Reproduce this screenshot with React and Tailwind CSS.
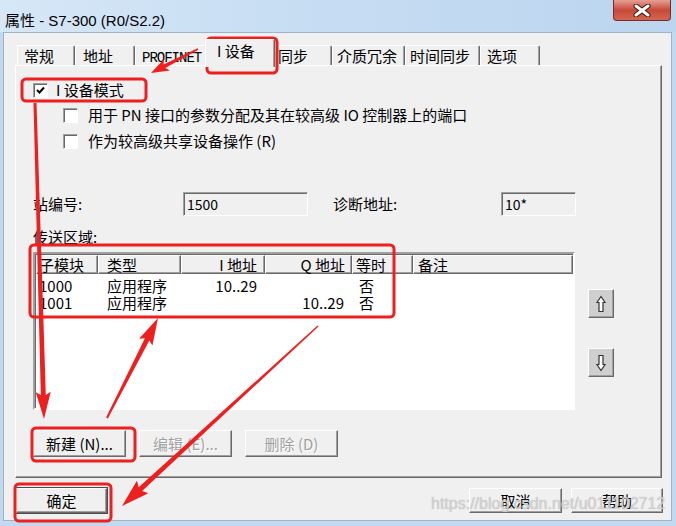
import React from 'react';

const ui = 'font-["Noto_Sans_CJK_SC",sans-serif]';
const raised =
  'border border-t-white border-l-white border-r-[#696969] border-b-[#696969] shadow-[inset_-1px_-1px_0_#a0a0a0]';
const sunken =
  'border border-t-[#a0a0a0] border-l-[#a0a0a0] border-r-white border-b-white shadow-[inset_1px_1px_0_#696969]';

const tabs = [
  { label: '常规', w: 'w-[58px]', pl: 'pl-[6px]' },
  { label: '地址', w: 'w-[60px]', pl: 'pl-[7px]' },
  { label: 'PROFINET', w: 'w-[72px]', pl: 'pl-[6px]', mono: true },
  { label: 'I 设备', w: 'w-[70px]', pl: 'pl-[11px]', active: true },
  { label: '同步', w: 'w-[59px]', pl: 'pl-[4px]' },
  { label: '介质冗余', w: 'w-[73px]', pl: 'pl-[4px]' },
  { label: '时间同步', w: 'w-[75px]', pl: 'pl-[4px]' },
  { label: '选项', w: 'w-[60px]', pl: 'pl-[6px]' },
];

const rows = [
  { id: '1000', type: '应用程序', i: '10..29', q: '', iso: '否' },
  { id: '1001', type: '应用程序', i: '', q: '10..29', iso: '否' },
];

function arrow(x1, y1, x2, y2, headLen, headW, tailW, neckW) {
  const dx = x2 - x1;
  const dy = y2 - y1;
  const len = Math.hypot(dx, dy);
  const ux = dx / len;
  const uy = dy / len;
  const px = -uy;
  const py = ux;
  const bx = x2 - ux * headLen;
  const by = y2 - uy * headLen;
  const pts = [
    [x1 + (px * tailW) / 2, y1 + (py * tailW) / 2],
    [bx + (px * neckW) / 2, by + (py * neckW) / 2],
    [bx + (px * headW) / 2 - ux * 3, by + (py * headW) / 2 - uy * 3],
    [x2, y2],
    [bx - (px * headW) / 2 - ux * 3, by - (py * headW) / 2 - uy * 3],
    [bx - (px * neckW) / 2, by - (py * neckW) / 2],
    [x1 - (px * tailW) / 2, y1 - (py * tailW) / 2],
  ];
  return pts.map((p) => p.join(',')).join(' ');
}

function Checkbox({ checked }) {
  return (
    <div className={`w-[15px] h-[15px] bg-white flex items-center justify-center ${sunken}`}>
      {checked && (
        <svg width="9" height="8" viewBox="0 0 9 8">
          <path d="M1 4 L3.5 6.5 L8 1.5" fill="none" stroke="#000" strokeWidth="2" />
        </svg>
      )}
    </div>
  );
}

function MoveButton({ down }) {
  return (
    <div className={`w-[26px] h-[29px] bg-[#cfcfcf] flex items-center justify-center ${raised}`}>
      <svg width="12" height="18" viewBox="0 0 12 18" className={down ? 'rotate-180' : ''}>
        <path d="M6 1.5 L10 7.5 L8 7.5 L8 16.5 L4 16.5 L4 7.5 L2 7.5 Z" fill="#fff" stroke="#333" strokeWidth="1.2" />
      </svg>
    </div>
  );
}

function Button({ children, disabled, isDefault, className = '' }) {
  return (
    <div
      className={`h-[27px] bg-[#f0f0f0] flex items-center justify-center text-[15px] leading-[16px] ${raised} ${
        isDefault ? 'outline outline-1 outline-[#4d4d4d]' : ''
      } ${disabled ? 'text-[#a0a0a0] [text-shadow:1px_1px_0_#fff]' : 'text-black'} ${className}`}
    >
      {children}
    </div>
  );
}

export default function App() {
  return (
    <div className={`relative w-[676px] h-[526px] overflow-hidden bg-[#c2d9f0] ${ui}`}>
      {/* Title bar */}
      <div className="h-[32px] flex items-start bg-gradient-to-r from-[#d6e7f7] via-[#c5dcf2] to-[#bcd5ef]">
        <div className="pl-[5px] pt-[11px] text-[15px] leading-[20px] text-black font-['Liberation_Sans','Noto_Sans_CJK_SC',sans-serif]">
          属性 - S7-300 (R0/S2.2)
        </div>
        <div className="ml-auto mr-[5px] w-[58px] h-[21px] rounded-b-[4px] border border-t-0 border-[#7b2a24] bg-gradient-to-b from-[#e2a093] via-[#c8473a] to-[#d2664f] flex items-center justify-center">
          <svg width="18" height="13" viewBox="0 0 18 13">
            <path d="M3 2 L15 11 M15 2 L3 11" stroke="#3a1410" strokeWidth="5" strokeLinecap="round" />
            <path d="M3 2 L15 11 M15 2 L3 11" stroke="#fff" strokeWidth="3" strokeLinecap="round" />
          </svg>
        </div>
      </div>

      {/* Client area */}
      <div className="ml-[3px] w-[669px] h-[489px] bg-[#f0f0f0] border border-[#9db4cc] flex flex-col">
        {/* Tabs */}
        <div className="mt-[6px] ml-[13px] h-[26px] flex items-start text-[15px] leading-[18px] text-black">
          {tabs.map((t) =>
            t.active ? (
              <div
                key={t.label}
                className={`relative z-10 -ml-[2px] -mr-[2px] h-[28px] ${t.w} ${t.pl} pt-[2px] bg-[#f0f0f0] border-t border-l border-r border-t-white border-l-white border-r-[#696969] rounded-t-[2px] shadow-[inset_-1px_0_0_#a0a0a0]`}
              >
                {t.label}
              </div>
            ) : (
              <div
                key={t.label}
                className={`mt-[6px] h-[20px] ${t.w} ${t.pl} pt-[1px] border-t border-l border-r border-t-white border-l-white border-r-[#696969] rounded-t-[2px] shadow-[inset_-1px_0_0_#a0a0a0] whitespace-nowrap overflow-hidden`}
              >
                {t.mono ? (
                  <span className="font-['Liberation_Mono',monospace] text-[14px] tracking-[-1px]">{t.label}</span>
                ) : (
                  t.label
                )}
              </div>
            )
          )}
        </div>

        {/* Panel */}
        <div className="ml-[11px] w-[647px] h-[413px] border border-t-white border-l-white border-r-[#696969] border-b-[#696969] shadow-[inset_-1px_-1px_0_#a0a0a0] flex flex-col text-[15px] leading-[16px] text-black">
          <div className="mt-[16px] ml-[17px] h-[16px] flex items-center gap-[8px]">
            <Checkbox checked />
            <span>I 设备模式</span>
          </div>
          <div className="mt-[9px] ml-[47px] h-[16px] flex items-center gap-[10px]">
            <Checkbox />
            <span>用于 PN 接口的参数分配及其在较高级 IO 控制器上的端口</span>
          </div>
          <div className="mt-[10px] ml-[47px] h-[16px] flex items-center gap-[10px]">
            <Checkbox />
            <span>作为较高级共享设备操作 (R)</span>
          </div>

          <div className="mt-[43px] ml-[17px] h-[24px] flex items-center">
            <span className="w-[150px]">站编号:</span>
            <div className={`w-[125px] h-[24px] pl-[3px] flex items-center text-[14px] ${sunken}`}>1500</div>
            <span className="ml-[25px] w-[168px]">诊断地址:</span>
            <div className={`w-[75px] h-[24px] pl-[3px] flex items-center text-[14px] ${sunken}`}>10*</div>
          </div>

          <div className="mt-[13px] ml-[17px] h-[16px] flex items-center">传送区域:</div>

          <div className="mt-[7px] ml-[17px] flex items-start">
            <div className={`w-[542px] h-[158px] bg-white flex flex-col ${sunken} border-2 pl-[1px] pt-[1px]`}>
              <div className="h-[19px] flex bg-[#f0f0f0] shrink-0">
                <div className={`w-[62px] pl-[2px] flex items-center ${raised}`}>子模块</div>
                <div className={`w-[83px] pl-[8px] flex items-center ${raised}`}>类型</div>
                <div className={`w-[84px] pr-[7px] flex items-center justify-end ${raised}`}>I 地址</div>
                <div className={`w-[87px] pr-[6px] flex items-center justify-end ${raised}`}>Q 地址</div>
                <div className={`w-[61px] pl-[3px] flex items-center ${raised}`}>等时</div>
                <div className={`flex-1 pl-[4px] flex items-center ${raised}`}>备注</div>
              </div>
              <div className="pt-[3px] flex flex-col leading-[17px]">
                {rows.map((r) => (
                  <div key={r.id} className="h-[17px] flex items-center">
                    <div className="w-[62px] pl-[3px]">{r.id}</div>
                    <div className="w-[83px] pl-[9px]">{r.type}</div>
                    <div className="w-[84px] pr-[8px] text-right">{r.i}</div>
                    <div className="w-[87px] pr-[8px] text-right">{r.q}</div>
                    <div className="w-[61px] pl-[7px]">{r.iso}</div>
                  </div>
                ))}
              </div>
            </div>
            <div className="ml-[13px] flex flex-col">
              <div className="mt-[37px]">
                <MoveButton />
              </div>
              <div className="mt-[30px]">
                <MoveButton down />
              </div>
            </div>
          </div>

          <div className="mt-[20px] ml-[17px] flex gap-[13px]">
            <Button className="w-[93px]">新建 (N)...</Button>
            <Button className="w-[93px]" disabled>编辑 (E)...</Button>
            <Button className="w-[93px]" disabled>删除 (D)</Button>
          </div>
        </div>

        {/* Dialog buttons */}
        <div className="mt-[10px] ml-[12px] mr-[8px] flex items-center">
          <Button className="w-[91px] !h-[25px]" isDefault>确定</Button>
          <Button className="ml-auto w-[93px] !h-[25px]">取消</Button>
          <Button className="ml-[9px] w-[92px] !h-[25px]">帮助</Button>
        </div>
      </div>

      {/* Watermark */}
      <div className="absolute left-[431px] top-[494px] text-[16px] leading-[20px] text-[#d8d8d8]/80 font-['Liberation_Sans',sans-serif] [text-shadow:0_0_1px_#b0b0b0] pointer-events-none">
        https://blog.csdn.net/u011102712
      </div>

      {/* Red annotations */}
      <svg className="absolute inset-0 pointer-events-none" width="676" height="526" viewBox="0 0 676 526">
        <g fill="none" stroke="#ee1f1f" strokeWidth="3">
          <rect x="207" y="38" width="70" height="35" rx="4" />
          <rect x="22" y="79" width="124" height="22" rx="4" />
          <rect x="30" y="245" width="364" height="72" rx="4" />
          <rect x="32" y="428" width="103" height="33" rx="4" />
          <rect x="15" y="484" width="96" height="37" rx="4" />
        </g>
        <g fill="#ee1f1f">
          <polygon points={arrow(198, 49, 151, 73, 15, 13, 1.5, 4)} />
          <polygon points={arrow(35, 103, 44, 419, 24, 15, 3, 5)} />
          <polygon points={arrow(107, 418, 158, 318, 24, 15, 2, 5)} />
          <polygon points={arrow(318, 326, 122, 506, 25, 17, 1.5, 5)} />
        </g>
      </svg>
    </div>
  );
}
